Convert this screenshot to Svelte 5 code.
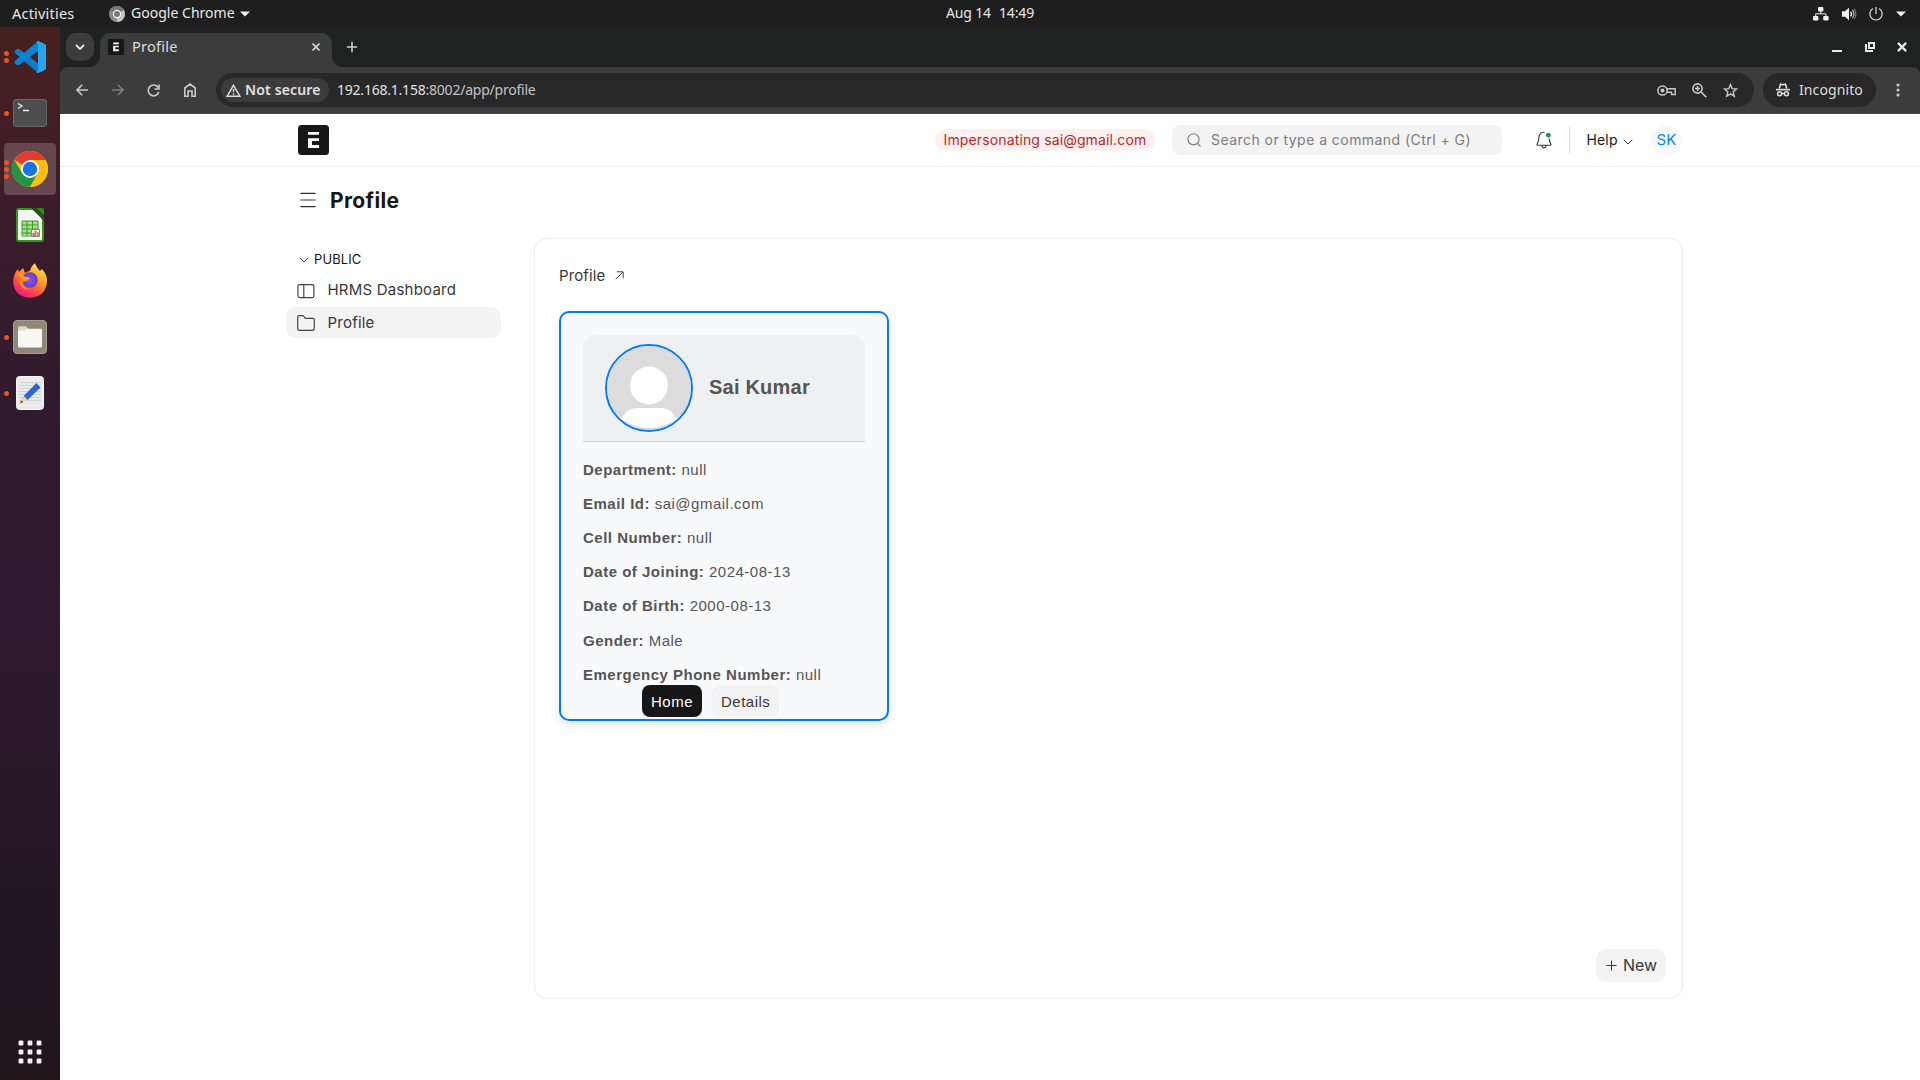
<script>
  const employee = [
    ['Department:', 'null'],
    ['Email Id:', 'sai@gmail.com'],
    ['Cell Number:', 'null'],
    ['Date of Joining:', '2024-08-13'],
    ['Date of Birth:', '2000-08-13'],
    ['Gender:', 'Male'],
    ['Emergency Phone Number:', 'null']
  ];
  const dock = [
    { id: 'code', dots: 2 },
    { id: 'terminal', dots: 1 },
    { id: 'chrome', dots: 3, active: true },
    { id: 'calc', dots: 0 },
    { id: 'firefox', dots: 0 },
    { id: 'files', dots: 1 },
    { id: 'editor', dots: 1 }
  ];
</script>

<div class="desktop">
  <header class="topbar">
    <span class="activities">Activities</span>
    <svg class="mini-chrome" width="16" height="16" viewBox="0 0 16 16">
      <circle cx="8" cy="8" r="8" fill="#8d8d8d" />
      <path d="M8 8 1.1 4A8 8 0 0 1 14.9 4Z" fill="#777" />
      <path d="M8 8 14.9 4A8 8 0 0 1 8 16Z" fill="#c4c4c4" />
      <circle cx="8" cy="8" r="4.2" fill="#f4f4f4" />
      <circle cx="8" cy="8" r="3" fill="#777" />
    </svg>
    <span class="app-name">Google Chrome</span>
    <svg class="tri" width="10" height="6" viewBox="0 0 10 6"><path d="M0 0.5h10L5 5.5z" fill="#f2f2f2" /></svg>
    <span class="clock"><span>Aug 14</span><span>14:49</span></span>
    <div class="tray">
      <svg width="16" height="14" viewBox="0 0 16 14" fill="#f2f2f2">
        <rect x="5" y="0" width="5.4" height="4.4" rx="1" /><rect x="0" y="9" width="5.4" height="4.4" rx="1" /><rect x="10.2" y="9" width="5.4" height="4.4" rx="1" />
        <path d="M7.7 4v3M2.7 9V6.8h10.2V9" fill="none" stroke="#f2f2f2" stroke-width="1" />
      </svg>
      <svg width="15" height="14" viewBox="0 0 15 14">
        <path d="M0 4.2h3L7 .8v12.4L3 9.8H0z" fill="#f2f2f2" />
        <path d="M8.6 4.6q1.8 2.4 0 4.8" fill="none" stroke="#f2f2f2" stroke-width="1.3" />
        <path d="M10.4 2.8q3.2 4.2 0 8.4" fill="none" stroke="#c8c8c8" stroke-width="1.1" />
        <path d="M12.2 1.6q3.4 5.4 0 10.8" fill="none" stroke="#888" />
      </svg>
      <svg width="14" height="14" viewBox="0 0 14 14" fill="none" stroke="#dedede" stroke-width="1.2">
        <path d="M4 1.6A6.1 6.1 0 1 0 10 1.6M7 0v7" />
      </svg>
      <svg width="10" height="6" viewBox="0 0 10 6"><path d="M0 0.5h10L5 5.5z" fill="#f2f2f2" /></svg>
    </div>
  </header>

  <div class="below">
    <nav class="dock">
      {#each dock as app (app.id)}
        <div class="dock-item" class:active={app.active}>
          <div class="dots">
            {#each Array(app.dots) as _}<i></i>{/each}
          </div>
          {#if app.id === 'code'}
            <svg width="32" height="32" viewBox="0 0 32 32">
              <path d="M.7 10 3 8Q4 7.400 5 8L31 27.500 24 32 .8 12Q0 11 .7 10Z" fill="#0f7bc4" />
              <path d="M.7 22 3 24Q4 24.600 5 24L28 7 24 0 .8 20Q0 21 .7 22Z" fill="#0a84d4" />
              <path d="M23.500 0 31 3.200Q32 3.700 32 5V27Q32 28.300 31 28.800L23.500 32Q22 31.500 22.500 30.500L24 30V2L22.500 1.500Z" fill="#2aa8f2" />
              <path d="M24 0v32l7-3.200Q32 28.300 32 27V5Q32 3.700 31 3.200Z" fill="#27a5f0" />
            </svg>
          {:else if app.id === 'terminal'}
            <svg width="34" height="28" viewBox="0 0 34 28">
              <rect x=".5" y=".5" width="33" height="27" rx="2.500" fill="#4c4d4c" stroke="#686a68" />
              <path d="M5 4.500 9 7 5 9.500M10 11.500h6" fill="none" stroke="#eee" stroke-width="1.300" />
            </svg>
          {:else if app.id === 'chrome'}
            <svg width="36" height="36" viewBox="0 0 36 36">
              <circle cx="18" cy="18" r="18" fill="#fbbf12" />
              <path d="M18 18 2.400 9A18 18 0 0 1 33.600 9Z" fill="#e33b2e" />
              <path d="M2.400 9A18 18 0 0 0 18 36L25.800 22.500 18 18 10.200 22.500Z" fill="#249447" />
              <path d="M33.600 9A18 18 0 0 1 18 36L25.800 22.500 18 9Z" fill="#fbbf12" />
              <circle cx="18" cy="18" r="9" fill="#fff" />
              <circle cx="18" cy="18" r="7.200" fill="#1b72e8" />
            </svg>
          {:else if app.id === 'calc'}
            <svg width="28" height="34" viewBox="0 0 28 34">
              <path d="M3 1H18L27 10V31Q27 33 25 33H3Q1 33 1 31V3Q1 1 3 1Z" fill="#f5f5f5" stroke="#34971c" stroke-width="2" />
              <path d="M18 0 28 10V13L15 0Z" fill="#1e5214" />
              <path d="M20 0h6q2 0 2 2v6Z" fill="#2e8b19" />
              <path d="M6 13h16v14H6z" fill="#a6df92" />
              <path d="M6 13h16M6 17h16M6 21h16M6 25h16M6 28h16M6 13v15M11 13v15M16.500 13v15M22 13v15" stroke="#379d22" stroke-width="1" />
              <path d="M15.500 21.500h8v7h-8z" fill="#fff" stroke="#8a8a8a" />
              <path d="M16.500 25h2v3h-2z" fill="#3a87cd" /><path d="M18.500 22.500h2v5.500h-2z" fill="#ea6c2d" /><path d="M21 24h2v4h-2z" fill="#c99a66" />
            </svg>
          {:else if app.id === 'firefox'}
            <svg class="firefox" width="34" height="35" viewBox="0 0 34 35">
              <defs><linearGradient id="fox" x1=".85" y1="0" x2=".25" y2="1"><stop offset="0" stop-color="#fff44f" /><stop offset=".4" stop-color="#ff9b24" /><stop offset=".75" stop-color="#ff4052" /><stop offset="1" stop-color="#e5188a" /></linearGradient>
              <radialGradient id="globe"><stop offset="0" stop-color="#8b4df5" /><stop offset="1" stop-color="#5f3fc4" /></radialGradient></defs>
              <path d="M1 13Q2 9 5 6L6 9 10 5 12 10Q15 8 17 8 18 3 22 .3 23 4 27 8L29 6Q35 13 33.800 20 32 34 17 34.700 2 34 .3 20Q.2 16 1 13Z" fill="url(#fox)" />
              <circle cx="17" cy="17" r="7.800" fill="url(#globe)" />
              <path d="M5 14Q10 16 17 15 16 18 12 18.500 9 19 10 21 12 26 18 25 11 29 7 22Z" fill="#ff7f2a" />
              <path d="M3 10Q8 10 11 13.500L17 14.500Q15 17 11 17Z" fill="#ff9d21" />
            </svg>
          {:else if app.id === 'files'}
            <svg width="34" height="34" viewBox="0 0 34 34">
              <rect x=".5" y=".5" width="33" height="33" rx="3.500" fill="#8f8778" stroke="#a49d8e" />
              <path d="M5 8Q5 6.300 6.500 6.300H13L15.500 9H20V14H5Z" fill="#ddd6cc" />
              <path d="M5 10.500H12L14.500 8.800H27.500Q29 8.800 29 10.300V26Q29 27.500 27.500 27.500H6.500Q5 27.500 5 26Z" fill="#f8f7f6" />
            </svg>
          {:else}
            <svg width="28" height="34" viewBox="0 0 28 34">
              <rect x=".5" y=".5" width="27" height="33" rx="3" fill="#ebebeb" stroke="#f8f8f8" />
              <path d="M3 6.500h22M3 9.500h22M3 12.500h22M3 15.500h22M3 18.500h22M3 21.500h22M3 24.500h22" stroke="#cecece" stroke-width=".8" />
              <path d="M20.500 7 24.500 11.500 11.500 24 7.500 20Z" fill="#2c66d2" />
              <path d="M7.500 20 11.500 24 4 27.500Z" fill="#f3cfa4" /><path d="M5.500 24.500 7 26 4 27.500Z" fill="#333" />
            </svg>
          {/if}
        </div>
      {/each}
      <svg class="launcher" width="24" height="24" viewBox="0 0 24 24" fill="#f4f2f4">
        {#each [0, 9, 18] as y}{#each [0, 9, 18] as x}
          <rect x={x + 0.6} y={y + 0.6} width="4.800" height="4.800" rx="1.200" />
        {/each}{/each}
      </svg>
    </nav>

    <section class="browser">
      <div class="tabstrip">
        <div class="tab-search">
          <svg width="10" height="6" viewBox="0 0 10 6"><path d="M1 1l4 4 4-4" fill="none" stroke="#e8e8e8" stroke-width="1.800" /></svg>
        </div>
        <div class="tab">
          <svg width="16" height="16" viewBox="0 0 31 31"><rect width="31" height="31" rx="2.500" fill="#171717" /><path d="M10 7h11v3H10zM10 13h11v3h-7v4h7v3.500H10z" fill="#fff" /></svg>
          <span>Profile</span>
          <svg class="tab-close" width="10" height="10" viewBox="0 0 10 10"><path d="M1.500 1.500l7 7M8.500 1.500L1.500 8.500" stroke="#dedede" stroke-width="1.600" /></svg>
        </div>
        <svg class="plus" width="12" height="12" viewBox="0 0 12 12"><path d="M6 .8v10.400M.8 6h10.400" stroke="#ccc" stroke-width="1.600" /></svg>
        <div class="window-controls">
          <svg width="10" height="10" viewBox="0 0 10 10"><path d="M0 9h10" stroke="#e8e8e8" stroke-width="2" /></svg>
          <svg width="10" height="10" viewBox="0 0 10 10" fill="none" stroke="#e8e8e8" stroke-width="2"><path d="M4 1h5v5H4zM1 2v7h7" /></svg>
          <svg width="10" height="10" viewBox="0 0 10 10"><path d="M.9.9l8.200 8.200M9.100.9L.9 9.100" stroke="#e8e8e8" stroke-width="2.200" /></svg>
        </div>
      </div>

      <div class="toolbar-back">
        <div class="toolbar">
          <div class="nav-icons">
            <svg width="12" height="12" viewBox="0 0 12 12" fill="none" stroke="#c9c9c9" stroke-width="1.600"><path d="M12 6H1.200M6.200.8 1 6l5.200 5.200" /></svg>
            <svg width="12" height="12" viewBox="0 0 12 12" fill="none" stroke="#7d7d7d" stroke-width="1.600"><path d="M0 6h10.800M5.800.8 11 6l-5.200 5.200" /></svg>
            <svg width="13" height="13" viewBox="0 0 13 13" fill="none" stroke="#c9c9c9" stroke-width="1.600"><path d="M11.200 3.500A5.400 5.400 0 1 0 11.800 8M12 .5V5H7.500" /></svg>
            <svg width="12" height="14" viewBox="0 0 12 14" fill="none" stroke="#c9c9c9" stroke-width="1.600"><path d="M.8 13.200V5L6 1l5.200 4v8.200H8V8H4v5.200Z" /></svg>
          </div>
          <div class="omnibox">
            <div class="chip">
              <svg width="15" height="13" viewBox="0 0 15 13"><path d="M7.500 1.300 13.800 12.200H1.200Z" fill="none" stroke="#dadada" stroke-width="1.500" /><path d="M7.500 5v3.300M7.500 9.300v1.400" stroke="#dadada" stroke-width="1.400" /></svg>
              <b>Not secure</b>
            </div>
            <span class="url"><em>192.168.1.158</em>:8002/app/profile</span>
            <div class="omni-icons">
              <svg width="19" height="11" viewBox="0 0 19 11"><circle cx="5.500" cy="5.500" r="4.600" fill="none" stroke="#c9c9c9" stroke-width="1.500" /><circle cx="5.500" cy="5.500" r="2" fill="#c9c9c9" /><path d="M9.600 3.800H18.200V9.500H14.500V7.200H9.600" fill="none" stroke="#c9c9c9" stroke-width="1.400" /></svg>
              <svg width="15" height="15" viewBox="0 0 15 15" fill="none" stroke="#c9c9c9" stroke-width="1.600"><circle cx="5.500" cy="5.500" r="4.600" /><path d="M9 9l5.300 5.300M5.500 3v5M3 5.500h5" /></svg>
              <svg width="15" height="15" viewBox="0 0 15 15"><path d="M7.500 1.600 9.200 5.700 13.600 6 10.200 8.800 11.300 13.200 7.500 10.800 3.700 13.200 4.800 8.800 1.400 6 5.800 5.700Z" fill="none" stroke="#c9c9c9" stroke-width="1.400" /></svg>
            </div>
          </div>
          <div class="incognito">
            <svg width="14" height="14" viewBox="0 0 14 14" fill="none" stroke="#e0e0e0" stroke-width="1.500"><path d="M3.300 5.500 4.500 1.200 7 1.800 9.500 1.200 10.700 5.500" /><path d="M0 6.600h14" stroke-width="1.600" /><circle cx="3.600" cy="10.800" r="2" /><circle cx="10.400" cy="10.800" r="2" /><path d="M5.600 10.500h2.800" /></svg>
            <span>Incognito</span>
          </div>
          <svg class="kebab" width="4" height="14" viewBox="0 0 4 14" fill="#c9c9c9"><circle cx="2" cy="2" r="1.600" /><circle cx="2" cy="7" r="1.600" /><circle cx="2" cy="12" r="1.600" /></svg>
        </div>
      </div>

      <div class="page">
        <div class="navbar">
          <svg class="brand" width="31" height="30" viewBox="0 0 31 30"><rect width="31" height="30" rx="3.500" fill="#171717" /><path d="M10 7h11v2.800H10zM10 13.200h11V16h-7v4h7v3H10z" fill="#fff" /></svg>
          <span class="impersonating">Impersonating sai@gmail.com</span>
          <div class="search">
            <svg width="14" height="14" viewBox="0 0 14 14" fill="none" stroke="#7c7c7c" stroke-width="1.100"><circle cx="6.500" cy="6.300" r="5.600" /><path d="M10.500 10.300 13.500 13.500" /></svg>
            <span>Search or type a command (Ctrl + G)</span>
          </div>
          <svg class="bell" width="16" height="18" viewBox="0 0 16 18"><path d="M8.500 1.300C5 .9 3 3.300 3 6.300 3 9.500 2.300 11 1 13.200Q.8 14.200 1.600 14.200H14.400Q15.200 14.200 15 13.200C13.900 11.500 13.300 9.800 13.200 7.500M6 14.500q.3 2.400 2 2.400t2-2.400" fill="none" stroke="#383838" stroke-width="1.100" /><circle cx="12.300" cy="4.200" r="2.400" fill="#278f5e" /></svg>
          <i class="divider"></i>
          <span class="help">Help</span>
          <svg class="help-caret" width="10" height="6" viewBox="0 0 10 6"><path d="M.7.800 5 5 9.300.800" fill="none" stroke="#383838" stroke-width="1" /></svg>
          <span class="user">SK</span>
        </div>

        <div class="page-head">
          <svg width="16" height="16" viewBox="0 0 16 16" stroke="#333" stroke-width="1.200"><path d="M.5 1.400h15M.5 8h15M.5 14.600h15" /></svg>
          <h1>Profile</h1>
        </div>

        <div class="columns">
          <aside>
            <div class="group">
              <svg width="10" height="6" viewBox="0 0 10 6"><path d="M.7.800 5 5 9.300.800" fill="none" stroke="#383838" stroke-width="1" /></svg>
              <span>PUBLIC</span>
            </div>
            <div class="link">
              <svg width="18" height="16" viewBox="0 0 18 16" fill="none" stroke="#444" stroke-width="1.200"><rect x=".9" y="1.600" width="16" height="13" rx="1.800" /><path d="M6.800 1.600v13" /></svg>
              <span>HRMS Dashboard</span>
            </div>
            <div class="link selected">
              <svg width="18" height="16" viewBox="0 0 18 16" fill="none" stroke="#444" stroke-width="1.200"><path d="M.7 13V2.300Q.7.700 2.300.700H5.500Q6.500.700 7 1.500L8.300 3.300H15.700Q17.300 3.300 17.300 4.900V13Q17.300 15.300 15.700 15.300H2.300Q.7 15.300.700 13Z" /></svg>
              <span>Profile</span>
            </div>
          </aside>

          <main>
            <div class="crumb">
              <span>Profile</span>
              <svg width="9" height="9" viewBox="0 0 9 9" fill="none" stroke="#444" stroke-width="1"><path d="M.8 8.200 8 1M1.800.8H8.200V7.200" /></svg>
            </div>
            <article>
              <div class="person">
                <div class="avatar">
                  <svg width="84" height="84" viewBox="0 0 84 84"><rect width="84" height="84" fill="#dcdcdc" /><circle cx="42" cy="39.500" r="19" fill="#fff" /><path d="M14 73Q20 62 30 62H54Q64 62 70 73Q56 82 42 82T14 73Z" fill="#fff" /></svg>
                </div>
                <h2>Sai Kumar</h2>
              </div>
              <dl>
                {#each employee as [label, value]}
                  <div><dt>{label}</dt> <dd>{value}</dd></div>
                {/each}
              </dl>
              <div class="actions">
                <button class="primary">Home</button>
                <button>Details</button>
              </div>
            </article>
            <button class="new">
              <svg width="11" height="11" viewBox="0 0 11 11" stroke="#383838"><path d="M5.500.5v10M.5 5.500h10" /></svg>
              <span>New</span>
            </button>
          </main>
        </div>
      </div>
    </section>
  </div>
</div>

<style>
  :global(body) { margin: 0; overflow: hidden; }
  * { box-sizing: border-box; }
  svg { display: block; flex: none; }
  span, b, h1, h2 { white-space: nowrap; }
  .desktop { width: 1920px; height: 1080px; display: flex; flex-direction: column; font-family: 'Noto Sans', sans-serif; background: #fff; }
  .topbar { height: 27px; flex: none; background: #1e1e1e; color: #e8e8e8; display: flex; align-items: center; padding-left: 12px; font-size: 14px; line-height: 26px; }
  .topbar > span { height: 27px; }
  .activities { width: 97px; font-size: 14.5px; letter-spacing: 0.2px; }
  .app-name { width: 109px; margin-left: 6px; letter-spacing: 0.02px; }
  .clock { margin-left: 696px; width: 867px; display: flex; gap: 8px; letter-spacing: -0.15px; }
  .tray { display: flex; align-items: center; gap: 12.5px; }
  .below { flex: 1; display: flex; min-height: 0; }

  .dock { width: 60px; flex: none; padding: 4px 4px 16px; display: flex; flex-direction: column; gap: 4px; background: linear-gradient(#48211f 0, #3c1c2a 17%, #301a2f 36%, #2f1930 55%, #241625 85%, #21151a 100%); }
  .dock-item { height: 52px; display: flex; align-items: center; justify-content: center; border-radius: 4px; position: relative; }
  .dock-item.active { background: #66474f; }
  .firefox { margin-bottom: 1px; }
  .dots { position: absolute; left: 0; top: 0; height: 52px; display: flex; flex-direction: column; justify-content: center; gap: 2px; }
  .dots i { width: 5px; height: 5px; border-radius: 50%; background: #e95420; }
  .launcher { margin: auto 0 0 14px; }

  .browser { flex: 1; display: flex; flex-direction: column; min-width: 0; }
  .tabstrip { height: 40px; flex: none; background: #202221; display: flex; align-items: center; padding: 0 13px 0 6px; }
  .tab-search { width: 28px; height: 28px; border-radius: 10px; background: #3c3c3c; display: flex; align-items: center; justify-content: center; }
  .tab { align-self: flex-end; margin-left: 6px; width: 232px; height: 34px; border-radius: 10px 10px 0 0; background: #3c3c3c; display: flex; align-items: center; padding: 0 11px 6px 8px; color: #dcdcdc; font-size: 14.5px; position: relative; }
  .tab::before, .tab::after { content: ''; position: absolute; bottom: 0; width: 10px; height: 10px; }
  .tab::before { left: -10px; background: radial-gradient(circle at 0 0, transparent 9.5px, #3c3c3c 10px); }
  .tab::after { right: -10px; background: radial-gradient(circle at 100% 0, transparent 9.5px, #3c3c3c 10px); }
  .tab span { margin-left: 8px; padding-bottom: 2px; letter-spacing: 0.25px; }
  .tab-close { margin-left: auto; }
  .plus { margin-left: 14px; }
  .window-controls { margin-left: auto; display: flex; gap: 22.5px; }
  .toolbar-back { background: #202221; flex: none; }
  .toolbar { height: 47px; background: #3c3c3c; border-bottom: 1px solid #454545; border-radius: 8px 8px 0 0; display: flex; align-items: center; padding: 0 20px 0 16px; font-size: 14px; }
  .nav-icons { width: 140px; display: flex; align-items: center; gap: 23.6px; }
  .omnibox { width: 1538px; height: 34px; border-radius: 17px; background: #282828; display: flex; align-items: center; padding: 0 16.5px 0 5px; }
  .chip { width: 108px; height: 24px; border-radius: 12px; background: #3c3c3c; display: flex; align-items: center; padding-left: 5px; gap: 4px; color: #e2e2e2; }
  .chip b { font-weight: 600; letter-spacing: 0.15px; padding-bottom: 2px; }
  .url { margin-left: 8px; color: #c4c4c4; letter-spacing: -0.22px; padding-bottom: 2px; }
  .url em { font-style: normal; color: #e2e2e2; }
  .omni-icons { margin-left: auto; display: flex; align-items: center; gap: 16px; }
  .incognito { margin-left: 9px; width: 113px; height: 34px; border-radius: 17px; background: #282828; display: flex; align-items: center; gap: 9px; padding-left: 13px; color: #dedede; }
  .incognito span { padding-bottom: 2px; letter-spacing: 0.1px; }
  .kebab { margin-left: auto; }

  .page { flex: 1; background: #fff; font-family: Inter, sans-serif; color: #171717; font-size: 15px; }
  .navbar { height: 53px; border-bottom: 1px solid #ededed; display: flex; align-items: center; padding-left: 238px; }
  .impersonating { margin-left: 606px; width: 220px; height: 22px; line-height: 21px; padding-left: 8.5px; border-radius: 11px; background: #fff0f0; color: #b52a2a; font-size: 14px; letter-spacing: 0.14px; }
  .search { margin-left: 17px; width: 330px; height: 30px; border-radius: 8px; background: #f3f3f3; display: flex; align-items: center; padding-left: 15px; gap: 10px; color: #7c7c7c; font-size: 14px; letter-spacing: 0.45px; }
  .search span { padding-bottom: 2px; }
  .bell { margin-left: 34px; }
  .divider { width: 1px; height: 26px; background: #dcdcdc; margin-left: 17px; }
  .help { margin-left: 16.4px; width: 36.6px; font-size: 14px; letter-spacing: 0.2px; padding-bottom: 2px; }
  .help-caret { margin-top: 4px; }
  .user { margin-left: 18px; width: 31px; height: 31px; border-radius: 50%; background: #f6faff; color: #0b83f7; text-align: center; line-height: 29px; font-size: 15px; letter-spacing: 0.2px; }
  .page-head { height: 71px; padding: 0 0 5px 240px; display: flex; align-items: center; gap: 14px; }
  h1 { margin: 0; padding-top: 1px; font-size: 21px; font-weight: 700; line-height: 30px; letter-spacing: 0.35px; }
  .columns { display: flex; padding-left: 226px; color: #383838; }
  aside { width: 215px; padding-top: 11px; }
  .group { height: 21px; display: flex; align-items: center; gap: 5px; padding-left: 13px; font-size: 13px; color: #171717; }
  .group span { padding-bottom: 2px; letter-spacing: 0.1px; }
  .link { height: 31px; border-radius: 10px; display: flex; align-items: center; gap: 12.5px; padding-left: 11px; letter-spacing: 0.22px; margin-top: 5px; }
  .link span { padding-bottom: 2px; }
  .link.selected { background: #f3f3f3; margin-top: 1px; }
  .link.selected span { padding-bottom: 1px; }
  main { margin-left: 33px; width: 1149px; height: 761px; border: 1px solid #ededed; border-radius: 13px; padding: 25px 16px 16px 24px; display: flex; flex-direction: column; }
  .crumb { height: 24px; padding-bottom: 1px; display: flex; align-items: center; gap: 9.5px; letter-spacing: 0.12px; }
  article { margin-top: 23px; width: 330px; height: 410px; border: 2px solid #007bff; border-radius: 10px; background: #f8f9fb; box-shadow: 0 4px 8px rgba(0, 0, 0, 0.1); padding: 22px; font-family: 'Liberation Sans', Arial, sans-serif; color: #555; letter-spacing: 0.5px; }
  .person { height: 107px; border-bottom: 1px solid #d1d3d5; background: #eff0f2; border-top-left-radius: 12px; border-top-right-radius: 12px; display: flex; align-items: center; padding-left: 22px; gap: 16px; }
  .avatar { width: 88px; height: 88px; border: 2px solid #007bff; border-radius: 50%; overflow: hidden; }
  h2 { margin: 0; padding-bottom: 2px; font-size: 20px; line-height: 24px; letter-spacing: 0.22px; }
  dl { margin: 17px 0 0; }
  dl div { height: 34px; line-height: 22px; white-space: nowrap; }
  dl div:nth-child(5) { height: 35px; }
  dt, dd { display: inline; margin: 0; }
  dt { font-weight: 700; }
  .actions { display: flex; gap: 10px; margin: -13px 0 0 59px; position: relative; }
  button { border: 0; height: 32px; padding: 0 9px; border-radius: 8px; background: #f3f3f3; color: #383838; font: inherit; letter-spacing: 0.5px; white-space: nowrap; }
  button.primary { background: #171717; color: #fff; }
  .new { margin-top: auto; align-self: flex-end; width: 70px; height: 33px; border-radius: 10px; display: flex; align-items: center; gap: 6px; padding-left: 10px; font-size: 16px; letter-spacing: 0; }
  .new span { padding-bottom: 2px; }
</style>
